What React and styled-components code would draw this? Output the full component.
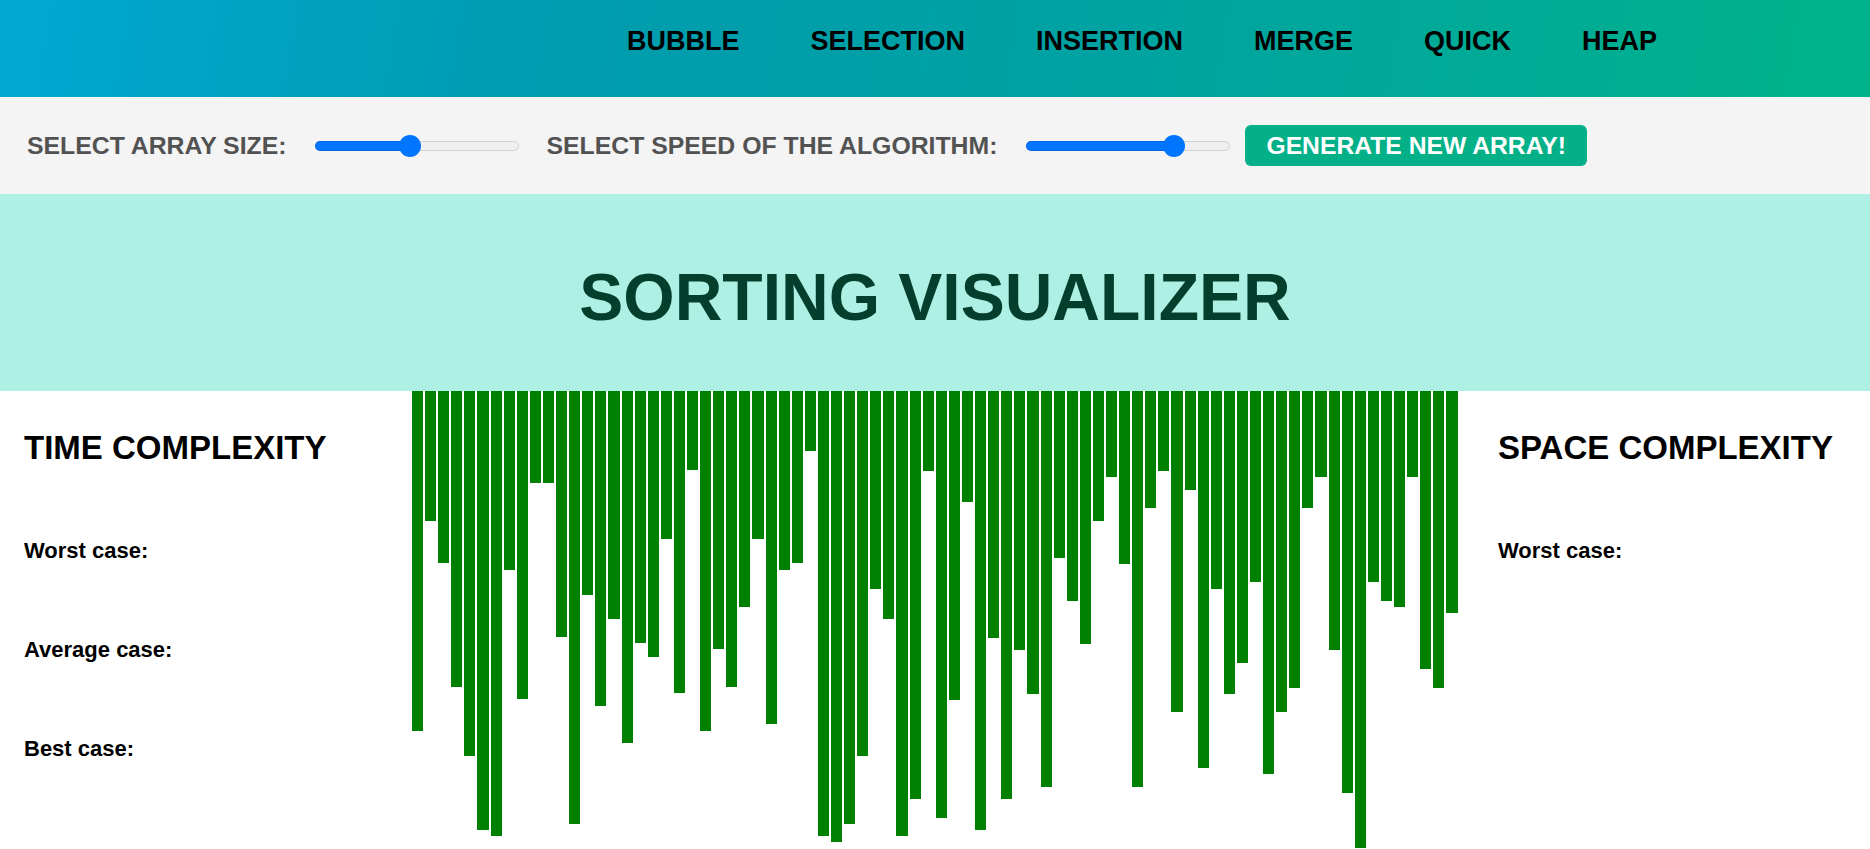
import React, { useState } from 'react';
import styled, { createGlobalStyle } from 'styled-components';

const GlobalStyle = createGlobalStyle`
  html, body {
    margin: 0;
    padding: 0;
    overflow: hidden;
    background: #ffffff;
    font-family: "Liberation Sans", Arial, sans-serif;
  }
  * {
    box-sizing: border-box;
  }
`;

const algorithms = ['BUBBLE', 'SELECTION', 'INSERTION', 'MERGE', 'QUICK', 'HEAP'];

// bar heights in px, read off the current array
const barHeights = [
  340, 130, 172, 296, 365, 439, 445, 179, 308, 92,
  92, 246, 433, 204, 315, 228, 352, 252, 266, 148,
  302, 79, 340, 258, 296, 216, 148, 333, 179, 172,
  60, 445, 451, 433, 365, 198, 228, 445, 408, 80,
  427, 309, 111, 439, 247, 408, 259, 303, 396, 167,
  210, 253, 130, 86, 173, 396, 117, 80, 321, 99,
  377, 198, 303, 272, 191, 383, 321, 297, 117, 86,
  259, 402, 457, 191, 210, 216, 86, 278, 297, 222,
];

const SLIDER_WIDTH = 204;
const THUMB = 22;

function RangeSlider({ initial, ml, mr }) {
  const [value, setValue] = useState(initial);
  const fill = THUMB / 2 + (value / 100) * (SLIDER_WIDTH - THUMB);
  return (
    <Styled.Range
      type="range"
      min="0"
      max="100"
      step="0.1"
      value={value}
      $ml={ml}
      $mr={mr}
      onChange={e => setValue(Number(e.target.value))}
      style={{
        background: `linear-gradient(to right, #0075ff 0, #0075ff ${fill}px, #efefef ${fill}px, #efefef 100%)`,
      }}
    />
  );
}

function App() {
  const [active, setActive] = useState(null);

  return (
    <Styled.Page>
      <GlobalStyle />
      <Styled.Header>
        <Styled.Nav>
          {algorithms.map(item => (
            <Styled.NavItem
              key={item}
              href="#"
              $active={active === item}
              onClick={e => {
                e.preventDefault();
                setActive(item);
              }}
            >
              {item}
            </Styled.NavItem>
          ))}
        </Styled.Nav>
      </Styled.Header>

      <Styled.Controls>
        <Styled.Label>SELECT ARRAY SIZE:</Styled.Label>
        <RangeSlider initial={46.2} ml={28} mr={28} />
        <Styled.Label>SELECT SPEED OF THE ALGORITHM:</Styled.Label>
        <RangeSlider initial={75.3} ml={29} mr={15} />
        <Styled.Button type="button">GENERATE NEW ARRAY!</Styled.Button>
      </Styled.Controls>

      <Styled.TitleBand>
        <Styled.Title>SORTING VISUALIZER</Styled.Title>
      </Styled.TitleBand>

      <Styled.Main>
        <Styled.Aside $pl={24}>
          <Styled.AsideTitle>TIME COMPLEXITY</Styled.AsideTitle>
          <Styled.CaseList>
            <Styled.Case>Worst case:</Styled.Case>
            <Styled.Case>Average case:</Styled.Case>
            <Styled.Case>Best case:</Styled.Case>
          </Styled.CaseList>
        </Styled.Aside>

        <Styled.Bars>
          {barHeights.map((h, i) => (
            <Styled.Bar key={i} style={{ height: h }} />
          ))}
        </Styled.Bars>

        <Styled.Aside $pl={40}>
          <Styled.AsideTitle>SPACE COMPLEXITY</Styled.AsideTitle>
          <Styled.CaseList>
            <Styled.Case>Worst case:</Styled.Case>
          </Styled.CaseList>
        </Styled.Aside>
      </Styled.Main>
    </Styled.Page>
  );
}

const Styled = {
  Page: styled.div`
    width: 1870px;
    height: 849px;
    display: flex;
    flex-direction: column;
  `,
  Header: styled.header`
    height: 97px;
    flex: none;
    display: flex;
    align-items: center;
    justify-content: flex-end;
    padding: 0 213px 14px 0;
    background: linear-gradient(100deg, #00a8d2 0%, #009cb0 30%, #00a2a2 58%, #00b38b 100%);
  `,
  Nav: styled.nav`
    display: flex;
    align-items: center;
    gap: 71px;
  `,
  NavItem: styled.a`
    font-size: 27px;
    font-weight: 700;
    color: ${p => (p.$active ? '#ffffff' : '#000000')};
    text-decoration: none;
    cursor: pointer;
    &:hover {
      color: #ffffff;
    }
  `,
  Controls: styled.div`
    height: 97px;
    flex: none;
    display: flex;
    align-items: center;
    padding-left: 27px;
    background: #f4f4f4;
  `,
  Label: styled.span`
    font-size: 24.8px;
    font-weight: 700;
    color: #525252;
    white-space: nowrap;
  `,
  Range: styled.input`
    -webkit-appearance: none;
    appearance: none;
    width: ${SLIDER_WIDTH}px;
    height: 10px;
    margin: 0 ${p => p.$mr}px 0 ${p => p.$ml}px;
    border-radius: 5px;
    box-shadow: inset 0 0 0 1px rgba(0, 0, 0, 0.12);
    outline: none;
    cursor: pointer;
    &::-webkit-slider-thumb {
      -webkit-appearance: none;
      appearance: none;
      width: ${THUMB}px;
      height: ${THUMB}px;
      border-radius: 50%;
      background: #0075ff;
      border: none;
    }
    &::-moz-range-thumb {
      width: ${THUMB}px;
      height: ${THUMB}px;
      border-radius: 50%;
      background: #0075ff;
      border: none;
    }
  `,
  Button: styled.button`
    height: 41px;
    padding: 0 21px;
    border: none;
    border-radius: 6px;
    background: #03b087;
    color: #ffffff;
    font-family: "Liberation Sans", Arial, sans-serif;
    font-size: 24.7px;
    font-weight: 700;
    white-space: nowrap;
    cursor: pointer;
  `,
  TitleBand: styled.div`
    height: 197px;
    flex: none;
    display: flex;
    align-items: center;
    justify-content: center;
    padding-top: 8px;
    background: #aef0e3;
  `,
  Title: styled.h1`
    margin: 0;
    font-size: 66px;
    font-weight: 700;
    color: #043f2e;
  `,
  Main: styled.main`
    flex: 1;
    display: flex;
    align-items: flex-start;
    min-height: 0;
  `,
  Aside: styled.aside`
    flex: none;
    width: ${p => (p.$pl === 24 ? 411 : 412)}px;
    padding: 38px 0 0 ${p => p.$pl}px;
  `,
  AsideTitle: styled.h2`
    margin: 0 0 71px;
    font-size: 33px;
    font-weight: 700;
    color: #000000;
  `,
  CaseList: styled.div`
    display: flex;
    flex-direction: column;
    gap: 73px;
  `,
  Case: styled.div`
    font-size: 22px;
    font-weight: 700;
    color: #000000;
  `,
  Bars: styled.div`
    flex: none;
    width: 1047px;
    display: flex;
    align-items: flex-start;
  `,
  Bar: styled.div`
    flex: 1 1 0;
    margin: 0 1px;
    background: #008000;
  `,
};

export default App;
